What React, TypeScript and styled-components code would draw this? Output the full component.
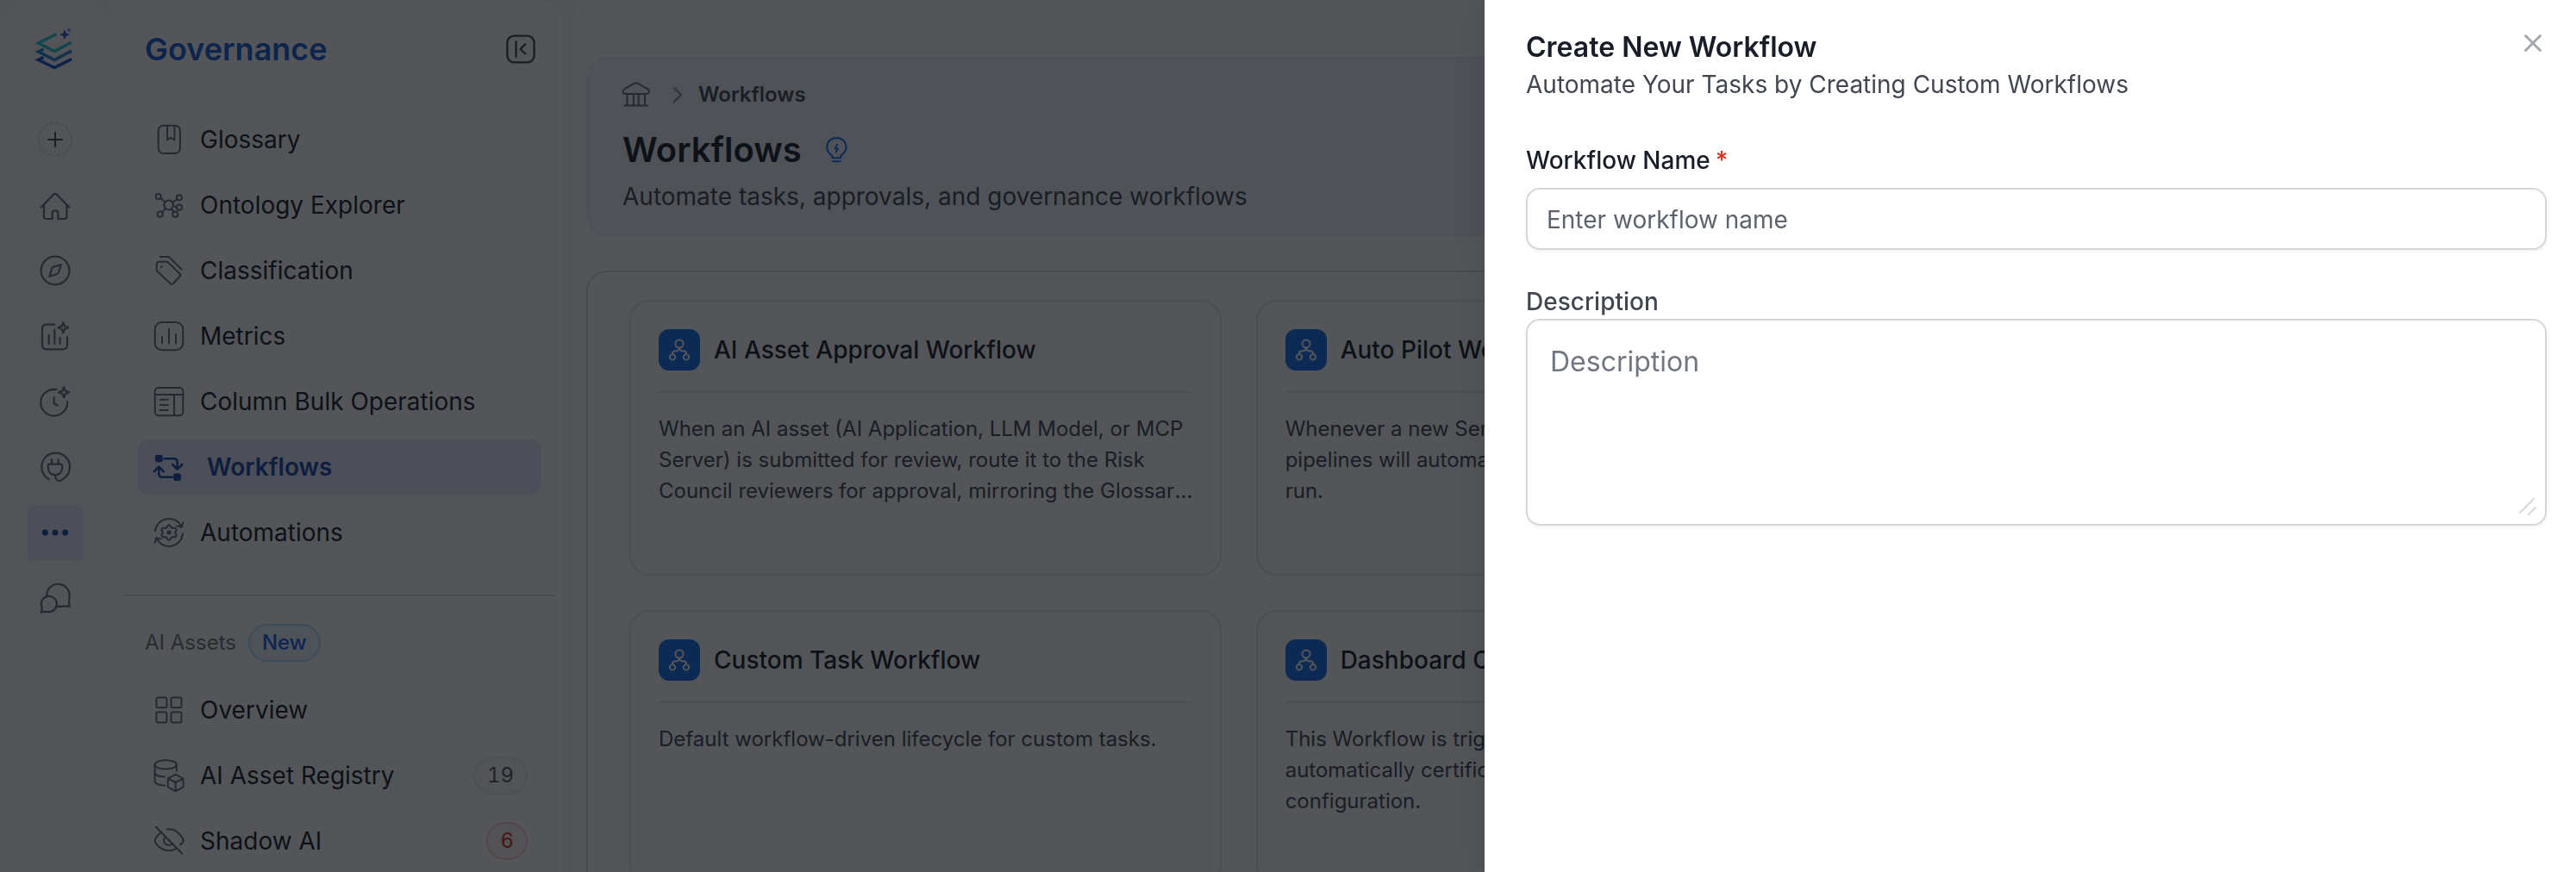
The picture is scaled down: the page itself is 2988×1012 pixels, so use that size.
import React from 'react';
import styled, { createGlobalStyle, css } from 'styled-components';

const color = {
  ink: '#181d27',
  text: '#414651',
  muted: '#717680',
  icon: '#67707a',
  line: '#e5e7e9',
  rule: '#dcdee1',
  field: '#d5d7da',
  brand: '#175cd3',
  brandDeep: '#1849a9',
  selected: '#e7ebf8',
  tile: '#1570ef',
  danger: '#d92d20',
  white: '#ffffff',
};

const GlobalStyle = createGlobalStyle`
  *, *::before, *::after { box-sizing: border-box; }
  html, body, #root { height: 100%; }
  body {
    margin: 0;
    overflow: hidden;
    background: #f8f8f9;
    color: ${color.ink};
    font-family: Inter, "Liberation Sans", sans-serif;
    font-size: 28px;
  }
  h1, h2, h3, p, ul, ol { margin: 0; padding: 0; }
  ul, ol { list-style: none; }
  a { color: inherit; text-decoration: none; }
  button { border: 0; padding: 0; background: none; font: inherit; color: inherit; cursor: pointer; }
`;

/* ---------- shell ---------- */

const Shell = styled.div`
  display: flex;
  height: 100%;
  overflow: hidden;
`;

const Rail = styled.nav`
  flex: none;
  width: 128px;
  background: #fbfbfc;
  border-radius: 28px 28px 0 0;
`;

const RailHeader = styled.div`
  display: flex;
  align-items: center;
  justify-content: center;
  height: 114px;
`;

const RailList = styled.ul`
  display: flex;
  flex-direction: column;
  align-items: center;
  gap: 12px;
  margin-top: 16px;
`;

const RailButton = styled.button<{ $active?: boolean }>`
  display: flex;
  align-items: center;
  justify-content: center;
  width: 64px;
  height: 64px;
  border-radius: 8px;
  color: ${(p) => (p.$active ? color.brandDeep : color.icon)};
  background: ${(p) => (p.$active ? color.selected : 'transparent')};
`;

const Sidebar = styled.aside`
  flex: none;
  width: 524px;
  background: ${color.white};
  border-radius: 0 28px 0 0;
`;

const SidebarHeader = styled.header`
  display: flex;
  align-items: center;
  justify-content: space-between;
  height: 114px;
  padding: 0 30px 0 40px;
`;

const SidebarTitle = styled.h2`
  font-size: 36px;
  line-height: 44px;
  font-weight: 600;
  color: ${color.brand};
`;

const IconButton = styled.button`
  display: flex;
  color: ${color.text};
`;

const NavList = styled.ul<{ $top: number }>`
  display: flex;
  flex-direction: column;
  gap: 12px;
  margin-top: ${(p) => p.$top}px;
  padding: 0 24px 0 32px;
`;

const NavLink = styled.a<{ $active?: boolean }>`
  display: flex;
  align-items: center;
  gap: 18px;
  height: 64px;
  padding: 0 16px 0 18px;
  border-radius: 12px;
  color: ${color.ink};
  svg { color: ${color.icon}; }
  ${(p) =>
    p.$active &&
    css`
      gap: 26px;
      background: ${color.selected};
      color: ${color.brandDeep};
      font-weight: 600;
      svg { color: ${color.brandDeep}; }
    `}
`;

const NavLabel = styled.span`
  flex: 1;
  line-height: 40px;
  white-space: nowrap;
`;

const Divider = styled.hr`
  height: 2px;
  margin: 40px 8px 0 16px;
  border: 0;
  background: ${color.rule};
`;

const SectionHeader = styled.div`
  display: flex;
  align-items: center;
  gap: 14px;
  margin-top: 32px;
  padding-left: 40px;
`;

const SectionTitle = styled.h3`
  font-size: 24px;
  line-height: 36px;
  font-weight: 400;
  color: ${color.muted};
`;

const tones = {
  blue: { ink: '#155eef', edge: '#b2ddff', fill: '#eff8ff' },
  gray: { ink: '#535862', edge: '#e9eaeb', fill: '#fafafa' },
  red: { ink: color.danger, edge: '#fecdca', fill: '#fef3f2' },
};
type Tone = keyof typeof tones;

const Badge = styled.span<{ $tone: Tone }>`
  display: inline-flex;
  align-items: center;
  height: 44px;
  padding: 0 14px;
  border: 2px solid ${(p) => tones[p.$tone].edge};
  border-radius: 22px;
  background: ${(p) => tones[p.$tone].fill};
  color: ${(p) => tones[p.$tone].ink};
  font-size: 24px;
  line-height: 36px;
  font-weight: ${(p) => (p.$tone === 'blue' ? 500 : 400)};
  font-variant-numeric: tabular-nums;
`;

/* ---------- main ---------- */

const Main = styled.main`
  flex: 1;
  min-width: 0;
  margin-left: 12px;
  padding: 66px 68px 0 16px;
  background: ${color.white};
  border-radius: 28px 0 0 0;
`;

const PageHeader = styled.header`
  padding: 24px 40px;
  border: 2px solid #e6f1fa;
  border-radius: 24px;
  background: #f1f7fa;
`;

const Crumbs = styled.ol`
  display: flex;
  align-items: center;
  height: 36px;
  font-size: 24px;
  line-height: 36px;
  font-weight: 600;
  color: ${color.text};
`;

const Crumb = styled.li`
  display: flex;
  align-items: center;
  svg { color: ${color.icon}; }
`;

const HomeLink = styled.a`
  display: flex;
`;

const TitleRow = styled.div`
  display: flex;
  align-items: center;
  gap: 24px;
  margin-top: 20px;
`;

const PageTitle = styled.h1`
  font-size: 40px;
  line-height: 52px;
  font-weight: 600;
`;

const HintButton = styled.button`
  display: flex;
  color: ${color.tile};
`;

const PageSubtitle = styled.p`
  margin-top: 8px;
  font-size: 28px;
  line-height: 40px;
  color: ${color.text};
`;

const Panel = styled.section`
  margin-top: 40px;
  padding: 32px 48px;
  border: 2px solid ${color.rule};
  border-radius: 24px;
`;

const CardGrid = styled.div`
  display: grid;
  grid-template-columns: repeat(3, minmax(0, 1fr));
  gap: 40px;
`;

const Card = styled.article<{ $column: number }>`
  grid-column: ${(p) => p.$column};
  min-height: 320px;
  padding: 32px;
  border: 2px solid ${color.line};
  border-radius: 24px;
`;

const CardHeader = styled.header`
  display: flex;
  align-items: center;
  gap: 16px;
  padding-bottom: 24px;
  border-bottom: 2px solid ${color.line};
`;

const CardTile = styled.span`
  display: flex;
  flex: none;
  width: 48px;
  height: 48px;
  border-radius: 12px;
  background: ${color.tile};
  color: ${color.white};
`;

const CardTitle = styled.h3`
  font-size: 28px;
  line-height: 40px;
  font-weight: 500;
  white-space: nowrap;
`;

const CardText = styled.p`
  display: -webkit-box;
  -webkit-box-orient: vertical;
  -webkit-line-clamp: 3;
  overflow: hidden;
  margin: 24px -8px 0 0;
  font-size: 24px;
  line-height: 36px;
  white-space: pre-line;
  color: ${color.text};
`;

/* ---------- drawer ---------- */

const Backdrop = styled.div`
  position: fixed;
  inset: 0;
  display: flex;
  justify-content: flex-end;
  background: rgba(10, 13, 18, 0.7);
`;

const Drawer = styled.section`
  width: 1266px;
  max-width: 100%;
  height: 100%;
  padding: 34px 34px 32px 48px;
  background: ${color.white};
  box-shadow: -12px 0 24px rgba(10, 13, 18, 0.08);
`;

const DrawerHeader = styled.header`
  display: flex;
  align-items: flex-start;
  justify-content: space-between;
`;

const DrawerTitle = styled.h2`
  font-size: 32px;
  line-height: 42px;
  font-weight: 600;
`;

const DrawerSubtitle = styled.p`
  line-height: 44px;
  color: ${color.text};
`;

const CloseButton = styled.button`
  display: flex;
  color: #a4a7ae;
`;

const Form = styled.form`
  display: flex;
  flex-direction: column;
  gap: 40px;
  margin-top: 46px;
`;

const Field = styled.div<{ $gap?: number }>`
  display: flex;
  flex-direction: column;
  gap: ${(p) => p.$gap ?? 0}px;
`;

const Label = styled.label<{ $strong?: boolean }>`
  font-weight: 500;
  line-height: 40px;
  color: ${(p) => (p.$strong ? color.ink : color.text)};
`;

const Required = styled.span`
  margin-left: 6px;
  color: ${color.danger};
`;

const fieldBox = css`
  display: block;
  width: 100%;
  border: 2px solid ${color.field};
  border-radius: 16px;
  outline: 0;
  background: ${color.white};
  box-shadow: 0 2px 4px rgba(10, 13, 18, 0.06);
  color: ${color.ink};
  font-family: inherit;
`;

const TextInput = styled.input`
  ${fieldBox}
  height: 72px;
  padding: 2px 22px 0;
  font-size: 28px;
  &::placeholder { color: #5d626c; opacity: 1; }
`;

const AreaWrap = styled.div`
  position: relative;
`;

const TextArea = styled.textarea`
  ${fieldBox}
  height: 240px;
  padding: 24px 26px;
  resize: none;
  font-size: 32px;
  line-height: 48px;
  &::placeholder { color: ${color.muted}; opacity: 1; }
`;

const Grip = styled.svg`
  position: absolute;
  right: 12px;
  bottom: 12px;
  color: ${color.field};
  pointer-events: none;
`;

/* ---------- icons ---------- */

const IconSvg = styled.svg`
  flex: none;
  overflow: visible;
`;

type IconProps = { children: React.ReactNode; w?: number; h?: number; sw?: number };
const Icon = ({ children, w = 36, h = 36, sw = 2 }: IconProps) => (
  <IconSvg
    width={w}
    height={h}
    viewBox={`0 0 ${w} ${h}`}
    fill="none"
    stroke="currentColor"
    strokeWidth={sw}
    strokeLinecap="round"
    strokeLinejoin="round"
    aria-hidden="true"
  >
    {children}
  </IconSvg>
);

const sparkle = (x: number, y: number, r: number) => {
  const k = r * 0.28;
  return `M${x} ${y - r}L${x + k} ${y - k}L${x + r} ${y}L${x + k} ${y + k}L${x} ${y + r}L${x - k} ${y + k}L${x - r} ${y}L${x - k} ${y - k}Z`;
};

const LogoIcon = () => (
  <svg width="48" height="50" viewBox="0 0 48 50" fill="none" strokeWidth="3.6" aria-hidden="true">
    <path d="M25.5 7.5L4.5 18L23.3 27.5L43 17" stroke="#2cc5d3" />
    <path d="M10.5 25L4.5 28L23.3 37.5L43 27" stroke="#1a86d6" />
    <path d="M10.5 34.5L4.5 37.5L23.3 46.5L43 36.5" stroke="#0f52d4" />
    <path d={sparkle(35, 8.3, 6)} fill="#2f5bd8" />
    <path d={sparkle(40, 2.8, 2.4)} fill="#2f5bd8" />
  </svg>
);

const PlusIcon = () => (
  <Icon>
    <circle cx="18" cy="18" r="19" strokeDasharray="3 3" strokeWidth="1.4" stroke="#d5d7da" />
    <path d="M10 18H26M18 10V26" stroke="#414651" />
  </Icon>
);
const HomeIcon = () => (
  <Icon sw={2.2}>
    <path d="M1.8 20.5L15.7 6Q18 4 20.3 6L34.2 20.5" />
    <path d="M5 17.5V31.5Q5 34 7.5 34H14.7V27Q14.7 24.4 18 24.4T21.4 27V34H28.9Q31.4 34 31.4 31.5V17.5" />
  </Icon>
);
const CompassIcon = () => (
  <Icon sw={2.2}>
    <circle cx="18" cy="18" r="16.4" />
    <path d="M24.8 11.2L22.2 19.5Q21.6 21.2 20 22L11.4 24.8L14 16Q14.6 14.4 16.2 13.6Z" />
  </Icon>
);
const InsightIcon = () => (
  <Icon sw={2.2}>
    <path d="M17.3 4.7H8Q3 4.7 3 9.7V28.3Q3 33.3 8 33.3H27Q32 33.3 32 28.3V19" />
    <path d="M10.7 16.7V27M17.3 10.7V27M23.6 20V27" />
    <path d={sparkle(27.3, 8.3, 6)} />
  </Icon>
);
const ClockIcon = () => (
  <Icon sw={2.2}>
    <path d="M19.5 4.1A15.4 15.4 0 1 0 32 17.8" />
    <path d="M16.7 13.7V20.3L21 22.7" />
    <path d={sparkle(28.2, 7.3, 6)} />
  </Icon>
);
const PlugIcon = () => (
  <Icon sw={2.2}>
    <path d="M10.8 32.2A16.3 16.3 0 1 1 27 31.9C25.2 33.2 23.6 34.6 21.6 34C19 33.2 18.2 30.8 18 27.2" />
    <path d="M14 9.3V14.7M21.7 9.3V14.7M9.6 17.2Q9.6 14.7 12 14.7H24Q26.4 14.7 26.4 17.2C26.4 23 23.5 27.2 18 27.2S9.6 23 9.6 17.2Z" />
  </Icon>
);
const MoreIcon = () => (
  <Icon>
    <g fill="currentColor" stroke="none">
      <circle cx="6.3" cy="18" r="3.5" />
      <circle cx="18" cy="18" r="3.5" />
      <circle cx="29.7" cy="18" r="3.5" />
    </g>
  </Icon>
);
const ChatIcon = () => (
  <Icon sw={2.2}>
    <path d="M8.3 16.2A13.2 13.2 0 1 1 34.4 17.5C34 21 33.6 22.5 34.6 27.6C29 26.6 25.5 28.4 19.8 27.6" />
    <path d="M2.6 29A9.1 9.1 0 1 1 10.6 34.1C7.6 34.2 5.5 33.2 1.7 34.6C2.4 32 2.6 31 2.6 29Z" />
  </Icon>
);
const CollapseIcon = () => (
  <Icon sw={2.4}>
    <rect x="2.4" y="2.6" width="31.2" height="30.8" rx="8" />
    <path d="M12.6 9.2V26.6M23.2 12.4L17.5 18L23.2 23.4" />
  </Icon>
);
const GlossaryIcon = () => (
  <Icon>
    <rect x="5.7" y="1.8" width="25.2" height="32.3" rx="6" />
    <path d="M16 2V18.4L20.2 15.8L24.4 18.4V2" />
  </Icon>
);
const OntologyIcon = () => (
  <Icon>
    <circle cx="17.7" cy="18" r="5.4" />
    <circle cx="5.7" cy="8" r="3.1" />
    <circle cx="30" cy="9.3" r="3.1" />
    <circle cx="30" cy="20.7" r="3.1" />
    <circle cx="25.3" cy="28.7" r="3.1" />
    <circle cx="7.7" cy="28.7" r="3.1" />
    <path d="M8.1 10L13.5 14.6M27.6 11.3L21.8 14.5M27 20.2L23 19.2M23.8 26L20.6 22.5M10 26.6L14 21.9" />
  </Icon>
);
const TagIcon = () => (
  <Icon>
    <path d="M7.7 2H16.4Q17.8 2 19 3.1L32.8 16.7" />
    <path d="M3.7 10.7Q3.7 7.7 6.7 7.7H14.6Q16.2 7.7 17.4 8.9L30.6 21.8Q32 23.3 30.6 24.8L22.7 33.3Q21.2 34.7 19.8 33.3L4.9 19.2Q3.7 18.1 3.7 16.6Z" />
    <circle cx="9.3" cy="13.7" r="1.4" fill="currentColor" stroke="none" />
  </Icon>
);
const MetricsIcon = () => (
  <Icon>
    <rect x="1.7" y="2" width="32.6" height="32.2" rx="8" />
    <path d="M10 19V26.5M18 9.8V26.5M26 16V26.5" />
  </Icon>
);
const ColumnIcon = () => (
  <Icon>
    <rect x="1.7" y="2" width="32.6" height="32.2" rx="4" />
    <path d="M1.7 10H34.3M24 10V34M7.6 15.8H16.8M7.6 22H16.8M7.6 28H16.8" />
  </Icon>
);
const WorkflowIcon = () => (
  <Icon sw={2.6}>
    <rect x="2" y="4" width="8.7" height="8.3" rx="2" fill="currentColor" stroke="none" />
    <rect x="23.2" y="25.5" width="8.7" height="8.5" rx="2" fill="currentColor" stroke="none" />
    <path d="M12.5 8.3H23.7Q27.7 8.3 27.7 12.3V20.3M22.2 15.2L27.7 20.6L33.2 15.2" />
    <path d="M22 29.7H10.3Q6.3 29.7 6.3 25.7V18M0.8 23.2L6.3 17.8L11.8 23.2" />
  </Icon>
);
const AutomationIcon = () => (
  <Icon>
    <path d="M2 16.6A16 16 0 0 1 32.6 11.6M34.3 6.2L32.8 11.8L27.2 10.5" />
    <path d="M34 19.4A16 16 0 0 1 3.4 24.4M1.7 29.8L3.2 24.2L8.8 25.5" />
    <path d="M16.3 10.2Q18 8.6 19.7 10.2L20.4 12.3L22.6 13L24.9 12.6Q27 13.6 26.6 15.6L25.3 17.4V18.9L26.6 20.5Q27 22.6 24.9 23.4L22.6 23L20.4 23.9L19.7 25.8Q18 27.4 16.3 25.8L15.6 23.9L13.4 23L11.1 23.4Q9 22.6 9.4 20.5L10.7 18.9V17.4L9.4 15.6Q9 13.6 11.1 12.6L13.4 13L15.6 12.3Z" />
    <circle cx="18" cy="18" r="1.6" fill="currentColor" />
  </Icon>
);
const OverviewIcon = () => (
  <Icon>
    <rect x="3.4" y="3.4" width="12" height="11.8" rx="1.6" />
    <rect x="20.5" y="3.4" width="12" height="11.8" rx="1.6" />
    <rect x="3.4" y="20.6" width="12" height="11.8" rx="1.6" />
    <rect x="20.5" y="20.6" width="12" height="11.8" rx="1.6" />
  </Icon>
);
const RegistryIcon = () => (
  <Icon>
    <ellipse cx="14.2" cy="5.4" rx="12.6" ry="5.2" />
    <path d="M1.6 5.4V25C1.6 27.6 7 29.4 13 29.6M26.8 5.4V12.6M1.6 15C1.6 17.6 7 19.2 13 19.4" />
    <path d="M25.7 16.8L34.6 21.3V31.3L25.7 36.3L16.8 31.3V21.3ZM16.8 21.3L25.7 26L34.6 21.3M25.7 26V36" />
  </Icon>
);
const EyeOffIcon = () => (
  <Icon>
    <path d="M3 1.8L33.2 32.8" />
    <path d="M8.6 8.4C4.6 11.3 1.6 15.6 1.6 17.7C1.6 20.6 8.4 29.3 18 29.3C21 29.3 23.6 28.5 26 27.2" />
    <path d="M15.4 4.5C26.6 2.8 34.5 13.6 34.5 17.7C34.5 19 33.2 20.8 31.2 22.4" />
    <path d="M13.6 13.4C11.6 15.4 11.4 19 13.6 21.2C15.6 23.2 19 23.4 21.2 21.6" />
  </Icon>
);
const InstitutionIcon = () => (
  <Icon w={32} h={32}>
    <path d="M13 3.2Q15.7 1.4 18.4 3.2L29 9.2Q31.4 10.8 30.8 13Q30.2 15 28 15H3.6Q1.4 15 .8 13Q.4 10.8 2.6 9.2Z" />
    <path d="M5.4 15V28.6M13 15V28.6M18.7 15V28.6M26 15V28.6M2.3 28.6H29.3" />
  </Icon>
);
const CrumbChevron = () => (
  <Icon w={56} h={24}>
    <path d="M28 4L36 12L28 20" stroke="#8d929b" strokeWidth="2.4" />
  </Icon>
);
const BulbIcon = () => (
  <Icon w={32} h={36}>
    <path d="M11.3 27.2V24.6C8 22.3 5.2 19.4 5.2 14.8C5.2 8.6 10 4 16.3 4S27.5 8.6 27.5 14.8C27.5 19.4 24.6 22.3 21.3 24.6V27.2Z" />
    <path d="M11.8 31.2H20.8M17 12L14.6 16.4H18L15.6 20.4" />
  </Icon>
);
const FlowIcon = () => (
  <Icon w={48} h={48}>
    <circle cx="24" cy="17" r="4.6" />
    <circle cx="16" cy="32.4" r="3.2" />
    <circle cx="32" cy="32.4" r="3.2" />
    <path d="M16 29V28Q16 25.8 18.6 25.6Q24 25.4 24 21.8Q24 25.4 29.4 25.6Q32 25.8 32 28V29" />
  </Icon>
);
const CloseIcon = () => (
  <Icon w={32} h={32} sw={3}>
    <path d="M7.5 7.5L24.5 24.5M24.5 7.5L7.5 24.5" />
  </Icon>
);

/* ---------- data ---------- */

const railItems = [
  { name: 'Add', icon: <PlusIcon /> },
  { name: 'Home', icon: <HomeIcon /> },
  { name: 'Explore', icon: <CompassIcon /> },
  { name: 'Insights', icon: <InsightIcon /> },
  { name: 'Activity', icon: <ClockIcon /> },
  { name: 'Connections', icon: <PlugIcon /> },
  { name: 'More', icon: <MoreIcon />, active: true },
  { name: 'Chat', icon: <ChatIcon /> },
];

type NavItem = { label: string; icon: React.ReactNode; active?: boolean; count?: number; tone?: Tone };

const governance: NavItem[] = [
  { label: 'Glossary', icon: <GlossaryIcon /> },
  { label: 'Ontology Explorer', icon: <OntologyIcon /> },
  { label: 'Classification', icon: <TagIcon /> },
  { label: 'Metrics', icon: <MetricsIcon /> },
  { label: 'Column Bulk Operations', icon: <ColumnIcon /> },
  { label: 'Workflows', icon: <WorkflowIcon />, active: true },
  { label: 'Automations', icon: <AutomationIcon /> },
];

const aiAssets: NavItem[] = [
  { label: 'Overview', icon: <OverviewIcon /> },
  { label: 'AI Asset Registry', icon: <RegistryIcon />, count: 19, tone: 'gray' },
  { label: 'Shadow AI', icon: <EyeOffIcon />, count: 6, tone: 'red' },
];

type Workflow = { title: string; text: string; column: number };
const workflows: Workflow[] = [
  {
    title: 'AI Asset Approval Workflow',
    column: 1,
    text: 'When an AI asset (AI Application, LLM Model, or MCP Server) is submitted for review, route it to the Risk Council reviewers for approval, mirroring the Glossary approval workflow.',
  },
  {
    title: 'Auto Pilot Workflow',
    column: 2,
    text: 'Whenever a new Service is added, the agent\npipelines will automatically be created and\nrun.',
  },
  {
    title: 'Custom Task Workflow',
    column: 1,
    text: 'Default workflow-driven lifecycle for custom tasks.',
  },
  {
    title: 'Dashboard Certification',
    column: 2,
    text: 'This Workflow is triggered to apply\nautomatically certifications based on the\nconfiguration.',
  },
];

const Nav = ({ items, top }: { items: NavItem[]; top: number }) => (
  <NavList $top={top}>
    {items.map((item) => (
      <li key={item.label}>
        <NavLink href="#" $active={item.active}>
          {item.icon}
          <NavLabel>{item.label}</NavLabel>
          {item.count !== undefined && <Badge $tone={item.tone ?? 'gray'}>{item.count}</Badge>}
        </NavLink>
      </li>
    ))}
  </NavList>
);

export default function App() {
  return (
    <>
      <GlobalStyle />
      <Shell>
        <Rail>
          <RailHeader>
            <LogoIcon />
          </RailHeader>
          <RailList>
            {railItems.map((item) => (
              <li key={item.name}>
                <RailButton type="button" aria-label={item.name} $active={item.active}>
                  {item.icon}
                </RailButton>
              </li>
            ))}
          </RailList>
        </Rail>

        <Sidebar>
          <SidebarHeader>
            <SidebarTitle>Governance</SidebarTitle>
            <IconButton type="button" aria-label="Collapse">
              <CollapseIcon />
            </IconButton>
          </SidebarHeader>
          <Nav items={governance} top={16} />
          <Divider />
          <SectionHeader>
            <SectionTitle>AI Assets</SectionTitle>
            <Badge $tone="blue">New</Badge>
          </SectionHeader>
          <Nav items={aiAssets} top={24} />
        </Sidebar>

        <Main>
          <PageHeader>
            <Crumbs>
              <Crumb>
                <HomeLink href="#" aria-label="Home">
                  <InstitutionIcon />
                </HomeLink>
                <CrumbChevron />
              </Crumb>
              <Crumb>Workflows</Crumb>
            </Crumbs>
            <TitleRow>
              <PageTitle>Workflows</PageTitle>
              <HintButton type="button" aria-label="Learn more">
                <BulbIcon />
              </HintButton>
            </TitleRow>
            <PageSubtitle>Automate tasks, approvals, and governance workflows</PageSubtitle>
          </PageHeader>
          <Panel>
            <CardGrid>
              {workflows.map((flow) => (
                <Card key={flow.title} $column={flow.column}>
                  <CardHeader>
                    <CardTile>
                      <FlowIcon />
                    </CardTile>
                    <CardTitle>{flow.title}</CardTitle>
                  </CardHeader>
                  <CardText>{flow.text}</CardText>
                </Card>
              ))}
            </CardGrid>
          </Panel>
        </Main>
      </Shell>

      <Backdrop>
        <Drawer role="dialog" aria-labelledby="drawer-title">
          <DrawerHeader>
            <div>
              <DrawerTitle id="drawer-title">Create New Workflow</DrawerTitle>
              <DrawerSubtitle>Automate Your Tasks by Creating Custom Workflows</DrawerSubtitle>
            </div>
            <CloseButton type="button" aria-label="Close">
              <CloseIcon />
            </CloseButton>
          </DrawerHeader>
          <Form>
            <Field $gap={12}>
              <Label htmlFor="workflow-name" $strong>
                Workflow Name
                <Required>*</Required>
              </Label>
              <TextInput id="workflow-name" type="text" placeholder="Enter workflow name" />
            </Field>
            <Field>
              <Label htmlFor="workflow-description">Description</Label>
              <AreaWrap>
                <TextArea id="workflow-description" placeholder="Description" />
                <Grip width="20" height="20" viewBox="0 0 20 20" fill="none" stroke="currentColor" strokeWidth="2" strokeLinecap="round" aria-hidden="true">
                  <path d="M1 17L17 1M11 19L19 11" />
                </Grip>
              </AreaWrap>
            </Field>
          </Form>
        </Drawer>
      </Backdrop>
    </>
  );
}
